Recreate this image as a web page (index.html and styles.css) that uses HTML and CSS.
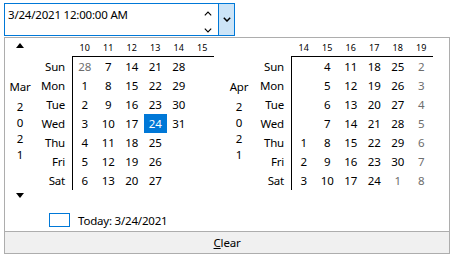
FILE: index.html
```html
<!DOCTYPE html>
<html>
<head>
    <title>Date Picker</title>
    <link rel="stylesheet" href="styles.css">
</head>
<body>
    <div class="picker">
        <div class="field">
            <div class="value">3/24/2021 12:00:00 AM</div>
            <div class="spin">
                <svg width="8" height="5" viewBox="0 0 8 5"><path d="M0.8 4.3 L4 1 L7.2 4.3" fill="none" stroke="#000" stroke-width="1.1"/></svg>
                <svg width="8" height="5" viewBox="0 0 8 5"><path d="M0.8 0.7 L4 4 L7.2 0.7" fill="none" stroke="#000" stroke-width="1.1"/></svg>
            </div>
            <div class="drop">
                <svg width="8" height="5" viewBox="0 0 8 5"><path d="M0.8 0.8 L4 4 L7.2 0.8" fill="none" stroke="#000" stroke-width="1.5"/></svg>
            </div>
        </div>

        <div class="popup">
            <div class="months">
                <!-- March -->
                <div class="month">
                    <div class="side">
                        <div class="nav-up"></div>
                        <div class="month-name">Mar</div>
                        <div class="year">2<br>0<br>2<br>1</div>
                        <div class="nav-down"></div>
                    </div>
                    <div class="names">
                        <div>Sun</div><div>Mon</div><div>Tue</div><div>Wed</div><div>Thu</div><div>Fri</div><div>Sat</div>
                    </div>
                    <div class="grid-wrap">
                        <div class="weeks">
                            <span>10</span><span>11</span><span>12</span><span>13</span><span>14</span><span>15</span>
                        </div>
                        <div class="days">
                            <span class="dim">28</span><span>1</span><span>2</span><span>3</span><span>4</span><span>5</span><span>6</span>
                            <span>7</span><span>8</span><span>9</span><span>10</span><span>11</span><span>12</span><span>13</span>
                            <span>14</span><span>15</span><span>16</span><span>17</span><span>18</span><span>19</span><span>20</span>
                            <span>21</span><span>22</span><span>23</span><span class="sel">24</span><span>25</span><span>26</span><span>27</span>
                            <span>28</span><span>29</span><span>30</span><span>31</span><span></span><span></span><span></span>
                            <span></span><span></span><span></span><span></span><span></span><span></span><span></span>
                        </div>
                    </div>
                </div>

                <!-- April -->
                <div class="month">
                    <div class="side plain">
                        <div class="month-name">Apr</div>
                        <div class="year">2<br>0<br>2<br>1</div>
                    </div>
                    <div class="names">
                        <div>Sun</div><div>Mon</div><div>Tue</div><div>Wed</div><div>Thu</div><div>Fri</div><div>Sat</div>
                    </div>
                    <div class="grid-wrap">
                        <div class="weeks">
                            <span>14</span><span>15</span><span>16</span><span>17</span><span>18</span><span>19</span>
                        </div>
                        <div class="days">
                            <span></span><span></span><span></span><span></span><span>1</span><span>2</span><span>3</span>
                            <span>4</span><span>5</span><span>6</span><span>7</span><span>8</span><span>9</span><span>10</span>
                            <span>11</span><span>12</span><span>13</span><span>14</span><span>15</span><span>16</span><span>17</span>
                            <span>18</span><span>19</span><span>20</span><span>21</span><span>22</span><span>23</span><span>24</span>
                            <span>25</span><span>26</span><span>27</span><span>28</span><span>29</span><span>30</span><span class="dim">1</span>
                            <span class="dim">2</span><span class="dim">3</span><span class="dim">4</span><span class="dim">5</span><span class="dim">6</span><span class="dim">7</span><span class="dim">8</span>
                        </div>
                    </div>
                </div>
            </div>

            <div class="today">
                <div class="today-box"></div>
                <span>Today: 3/24/2021</span>
            </div>

            <div class="clear"><u>C</u>lear</div>
        </div>
    </div>
</body>
</html>
```

FILE: styles.css
```css
body {
    margin: 0;
    font-family: "Noto Sans", sans-serif;
    font-size: 11.5px;
    letter-spacing: -0.2px;
    color: #000;
    background-color: #fff;
}
.picker {
    margin: 3px 0 0 4px;
    width: 446px;
}
.field {
    width: 231px;
    height: 33px;
    box-sizing: border-box;
    border: 1px solid #0078d7;
    display: flex;
}
.value {
    flex: 1;
    padding: 3px 0 0 3px;
    line-height: 16px;
}
.spin {
    width: 12px;
    margin-right: 4px;
    padding: 7px 0 2px;
    display: flex;
    flex-direction: column;
    justify-content: space-between;
    align-items: center;
}
.spin svg, .drop svg {
    display: block;
}
.drop {
    width: 15px;
    border-left: 1px solid #0078d7;
    background-color: #cce4f7;
    display: flex;
    align-items: center;
    justify-content: center;
}
.popup {
    margin-top: 1px;
    height: 217px;
    box-sizing: border-box;
    border: 1px solid #adadad;
    display: flex;
    flex-direction: column;
}
.months {
    display: flex;
}
.month {
    width: 219px;
    display: flex;
}
.side {
    width: 30px;
    display: flex;
    flex-direction: column;
    align-items: center;
    line-height: 16px;
}
.side.plain {
    padding-top: 10px;
}
.nav-up {
    margin-top: 5px;
    width: 0;
    height: 0;
    border-left: 4px solid transparent;
    border-right: 4px solid transparent;
    border-bottom: 5px solid #000;
}
.nav-down {
    margin-top: 30px;
    width: 0;
    height: 0;
    border-left: 4px solid transparent;
    border-right: 4px solid transparent;
    border-top: 5px solid #000;
}
.month-name {
    margin-top: 31px;
}
.year {
    margin-top: 4px;
    text-align: center;
}
.names {
    width: 30px;
    padding-top: 19px;
    text-align: right;
    line-height: 19px;
}
.grid-wrap {
    margin-left: 7px;
}
.weeks {
    display: grid;
    grid-template-columns: repeat(6, 23.5px);
    height: 16px;
    padding: 2px 0 0 1px;
    font-size: 9px;
    letter-spacing: 0;
    line-height: 16px;
    text-align: center;
}
.days {
    border-top: 1px solid #000;
    border-left: 1px solid #000;
    display: grid;
    grid-template-columns: repeat(6, 23.5px);
    grid-template-rows: repeat(7, 19px);
    grid-auto-flow: column;
    line-height: 19px;
    text-align: center;
}
.dim {
    color: #6d6d6d;
}
.sel {
    background-color: #0078d7;
    color: #fff;
}
.today {
    margin-top: 14px;
    padding-left: 44px;
    height: 16px;
    display: flex;
    align-items: center;
}
.today-box {
    width: 21px;
    height: 14px;
    box-sizing: border-box;
    border: 1px solid #0078d7;
    margin-right: 8px;
}
.clear {
    margin-top: auto;
    height: 21px;
    line-height: 21px;
    border-top: 1px solid #adadad;
    background-color: #f0f0f0;
    text-align: center;
}
```
